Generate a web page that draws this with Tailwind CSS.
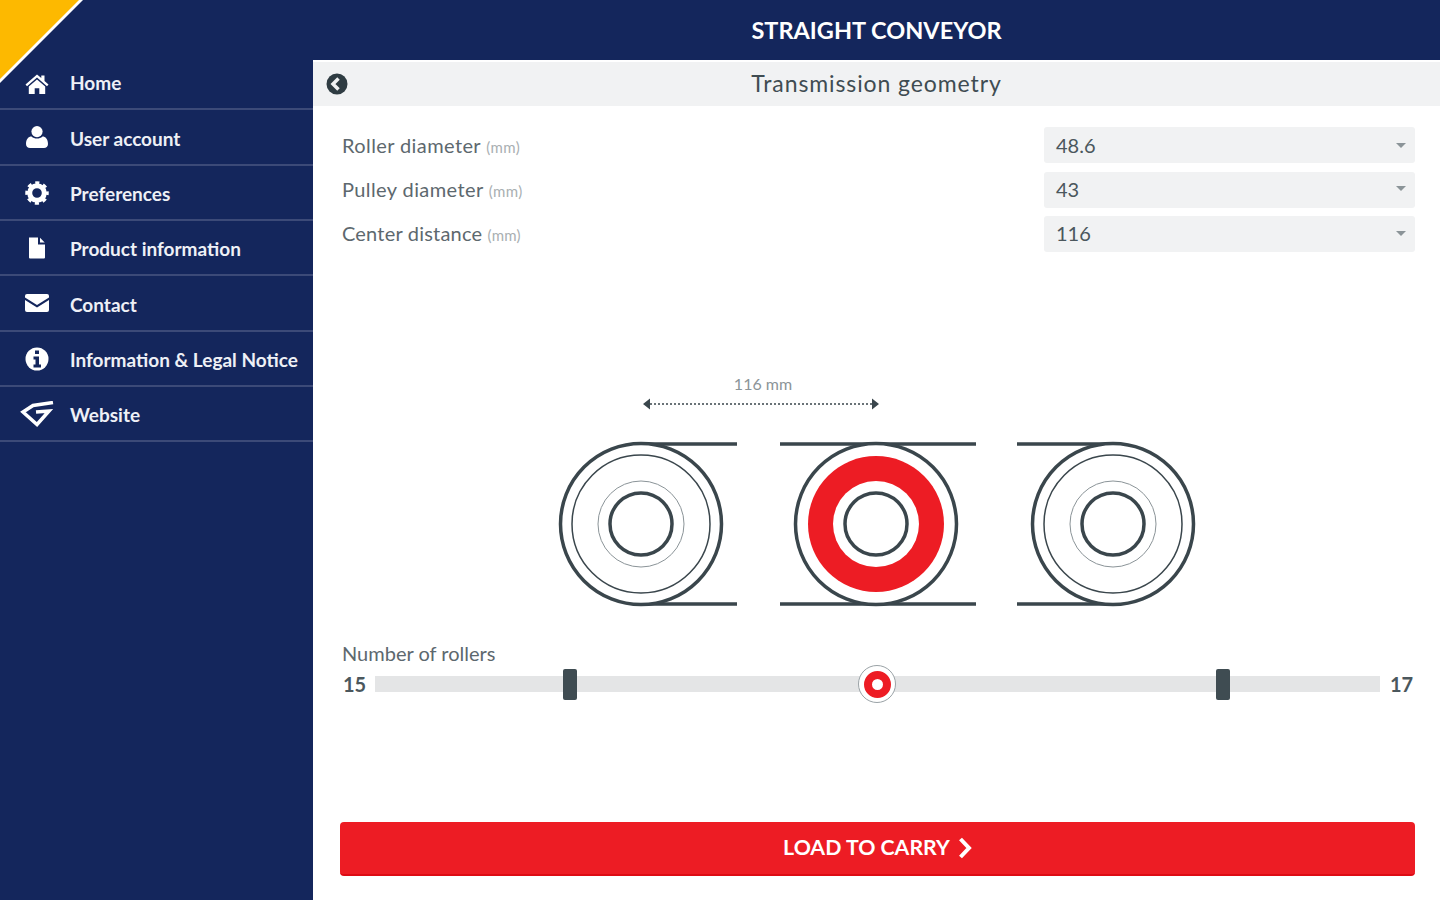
<!DOCTYPE html>
<html lang="en">
<head>
  <meta charset="UTF-8" />
  <title>Straight conveyor</title>
  <script src="https://cdn.jsdelivr.net/npm/@tailwindcss/browser@4"></script>
</head>
<body class="bg-white font-['Lato','Noto_Sans',sans-serif] text-[#3f4c52]">
  <div class="relative flex h-[900px] w-[1440px] overflow-hidden bg-[#14265c]">
    <!-- corner flag -->
    <svg class="absolute left-0 top-0" width="90" height="90" viewBox="0 0 90 90">
      <path d="M0 0H83L0 83z" fill="#fff" />
      <path d="M0 0H79L0 79z" fill="#fdb900" />
    </svg>

    <aside class="w-[313px] shrink-0 pt-[55px] text-[19px] font-bold text-[#eef0f6]">
      <a class="flex h-[55.33px] items-center border-b-2 border-[#3c4a78] pt-[4px]">
        <span class="flex w-[70px] justify-center">
          <svg class="ml-[4px]" width="26" height="24" viewBox="0 0 24 24" fill="#fff"><path d="M12 2.5 0.5 12.6l1.5 1.6L12 5.6l10 8.6 1.5-1.6-4-3.5V3.5h-3.2v2.4z" /><path d="M12 7.6 3.8 14.6V22h5.9v-5.8h4.6V22h5.9v-7.4z" /></svg>
        </span>
        <span>Home</span>
      </a>
      <a class="flex h-[55.33px] items-center border-b-2 border-[#3c4a78] pt-[4px]">
        <span class="flex w-[70px] justify-center">
          <svg class="ml-[4px] mt-[-3px]" width="24" height="24" viewBox="0 0 24 24" fill="#fff"><circle cx="12" cy="6.6" r="5.6" /><path d="M1 19c0-5 2.500-7.500 5.500-7.500 1.500 1.400 3.400 2 5.500 2s4-.6 5.500-2c3 0 5.500 2.500 5.500 7.500 0 2.800-1.800 4-4 4H5c-2.200 0-4-1.200-4-4z" /></svg>
        </span>
        <span>User account</span>
      </a>
      <a class="flex h-[55.33px] items-center border-b-2 border-[#3c4a78] pt-[4px]">
        <span class="flex w-[70px] justify-center">
          <svg class="ml-[4px] mt-[-3px]" width="24" height="24" viewBox="0 0 24 24" fill="none" stroke="#fff"><circle cx="12" cy="12" r="7.300" stroke-width="5" /><circle cx="12" cy="12" r="10" stroke-width="3.500" stroke-dasharray="4 3.850" stroke-dashoffset="2" /></svg>
        </span>
        <span>Preferences</span>
      </a>
      <a class="flex h-[55.33px] items-center border-b-2 border-[#3c4a78] pt-[4px]">
        <span class="flex w-[70px] justify-center">
          <svg class="ml-[4px] mt-[-3px]" width="24" height="24" viewBox="0 0 24 24" fill="#fff"><path d="M4 1.500h9v7h7v13a1 1 0 0 1-1 1H5a1 1 0 0 1-1-1z" /><path d="M15 1.800 19.700 6.500H15z" /></svg>
        </span>
        <span>Product information</span>
      </a>
      <a class="flex h-[55.33px] items-center border-b-2 border-[#3c4a78] pt-[4px]">
        <span class="flex w-[70px] justify-center">
          <svg class="ml-[4px] mt-[-3px]" width="24" height="20" viewBox="0 0 24 20" fill="#fff"><path d="M2 1h20a2 2 0 0 1 2 2v1.500L12 12 0 4.500V3a2 2 0 0 1 2-2z" /><path d="M0 7l12 7.500L24 7v10a2 2 0 0 1-2 2H2a2 2 0 0 1-2-2z" /></svg>
        </span>
        <span>Contact</span>
      </a>
      <a class="flex h-[55.33px] items-center border-b-2 border-[#3c4a78] pt-[4px]">
        <span class="flex w-[70px] justify-center">
          <svg class="ml-[4px] mt-[-3px]" width="24" height="24" viewBox="0 0 24 24"><circle cx="12" cy="12" r="11.500" fill="#fff" /><path d="M10 3.500h4v3.500h-4zM8.500 9.500H14v8h2v3H8.500v-3h2v-5h-2z" fill="#14265c" /></svg>
        </span>
        <span>Information &amp; Legal Notice</span>
      </a>
      <a class="flex h-[55.33px] items-center border-b-2 border-[#3c4a78] pt-[4px]">
        <span class="flex w-[70px] justify-center">
          <svg class="ml-[4px] mt-[-3px]" width="34" height="26" viewBox="0 0 34 26" fill="none" stroke="#fff" stroke-width="3.500"><path d="M33 1.500 13 4.500 3 11 17 23.500 29 10 16 11" /></svg>
        </span>
        <span>Website</span>
      </a>
    </aside>

    <main class="flex min-w-0 flex-1 flex-col">
      <header class="flex h-[60px] shrink-0 items-center justify-center pt-[2px] text-[23.5px] font-bold text-white">STRAIGHT CONVEYOR</header>
      <div class="flex flex-1 flex-col bg-white pt-[2px]">
        <div class="relative flex h-[44px] items-center justify-center bg-[#f1f2f3] pb-[2px] text-[23px] tracking-[0.9px]">
          <svg class="absolute left-[13px] top-[11px]" width="22" height="22" viewBox="0 0 22 22"><circle cx="11" cy="11" r="10.500" fill="#2f3c42" /><path d="M12.500 5.500 7 11l5.500 5.500" fill="none" stroke="#f1f2f3" stroke-width="3.500" /></svg>
          Transmission geometry
        </div>

        <div class="flex flex-col gap-[8.5px] pl-[29px] pr-[25px] pt-[21px]">
          <div class="flex h-[36px] items-center justify-between">
            <div class="text-[20px] tracking-[0.4px] text-[#5d686e]">Roller diameter <span class="text-[15px] text-[#a9afb2]">(mm)</span></div>
            <div class="flex h-full w-[371px] items-center justify-between rounded-[3px] bg-[#f1f2f3] pl-[12px] pr-[9px] text-[20px] text-[#4b575d]">48.6<span class="h-0 w-0 border-x-[5px] border-t-[5px] border-x-transparent border-t-[#8b9498]"></span></div>
          </div>
          <div class="flex h-[36px] items-center justify-between">
            <div class="pb-[2px] text-[20px] tracking-[0.4px] text-[#5d686e]">Pulley diameter <span class="text-[15px] text-[#a9afb2]">(mm)</span></div>
            <div class="flex h-full w-[371px] items-center justify-between rounded-[3px] bg-[#f1f2f3] pb-[2px] pl-[12px] pr-[9px] text-[20px] text-[#4b575d]">43<span class="h-0 w-0 border-x-[5px] border-t-[5px] border-x-transparent border-t-[#8b9498]"></span></div>
          </div>
          <div class="flex h-[36px] items-center justify-between">
            <div class="pb-[2px] text-[20px] tracking-[0.2px] text-[#5d686e]">Center distance <span class="text-[15px] text-[#a9afb2]">(mm)</span></div>
            <div class="flex h-full w-[371px] items-center justify-between rounded-[3px] bg-[#f1f2f3] pb-[2px] pl-[12px] pr-[9px] text-[20px] text-[#4b575d]">116<span class="h-0 w-0 border-x-[5px] border-t-[5px] border-x-transparent border-t-[#8b9498]"></span></div>
          </div>
        </div>

        <!-- roller drawing -->
        <svg class="ml-[237px] mt-[118px] block" width="660" height="242" viewBox="550 370 660 242" fill="none" stroke="#3a464c">
          <text x="763" y="390" text-anchor="middle" fill="#8b9498" stroke="none" font-size="16">116 mm</text>
          <path d="M650 404H872" stroke-width="1.500" stroke-dasharray="2 2" />
          <path d="M643 404l7-5.500v11zM879 404l-7-5.500v11z" fill="#3a464c" stroke="none" />
          <path d="M641 444H737M641 604H737M780 444H976M780 604H976M1017 444H1113M1017 604H1113" stroke-width="3.500" />
          <g fill="#fff">
            <circle cx="641" cy="524" r="80.500" stroke-width="3.500" />
            <circle cx="641" cy="524" r="69" stroke-width="1.500" />
            <circle cx="641" cy="524" r="43" stroke-width="1" stroke="#8b9498" />
            <circle cx="641" cy="524" r="31" stroke-width="3.500" />
            <circle cx="876" cy="524" r="80.500" stroke-width="3.500" />
            <circle cx="876" cy="524" r="68" fill="#ed1c24" stroke="none" />
            <circle cx="876" cy="524" r="43" stroke="none" />
            <circle cx="876" cy="524" r="31" stroke-width="3.500" />
            <circle cx="1113" cy="524" r="80.500" stroke-width="3.500" />
            <circle cx="1113" cy="524" r="69" stroke-width="1.500" />
            <circle cx="1113" cy="524" r="43" stroke-width="1" stroke="#8b9498" />
            <circle cx="1113" cy="524" r="31" stroke-width="3.500" />
          </g>
        </svg>

        <div class="pl-[29px] pr-[25px] pt-[27px]">
          <div class="text-[20px] leading-[28px] text-[#5d686e]">Number of rollers</div>
          <div class="mt-[-3px] flex h-[40px] items-center">
            <span class="w-[33px] pl-[1px] text-[20px] font-bold text-[#4b575d]">15</span>
            <div class="relative h-[16px] w-[1005px] bg-[#e4e5e6]">
              <span class="absolute left-[188px] top-[-7px] h-[31px] w-[14px] rounded-[2px] bg-[#3f4c52]"></span>
              <span class="absolute left-[841px] top-[-7px] h-[31px] w-[14px] rounded-[2px] bg-[#3f4c52]"></span>
              <span class="absolute left-[483px] top-[-11px] flex h-[38px] w-[38px] items-center justify-center rounded-full border border-[#9aa2a6] bg-white">
                <span class="block h-[27px] w-[27px] rounded-full border-[8px] border-[#ed1c24] bg-white"></span>
              </span>
            </div>
            <span class="ml-[10px] text-[20px] font-bold text-[#4b575d]">17</span>
          </div>
        </div>

        <div class="pl-[27px] pr-[25px] pt-[118px]">
          <button class="flex h-[54px] w-full items-center justify-center gap-[8px] rounded-[4px] border-b-2 border-[#dd0b14] bg-[#ed1c24] text-[21.3px] font-bold text-white">
            LOAD TO CARRY
            <svg width="14" height="22" viewBox="0 0 14 22" fill="none" stroke="#fff" stroke-width="4"><path d="M2.500 2 11 11 2.500 20" /></svg>
          </button>
        </div>
      </div>
    </main>
  </div>
</body>
</html>
